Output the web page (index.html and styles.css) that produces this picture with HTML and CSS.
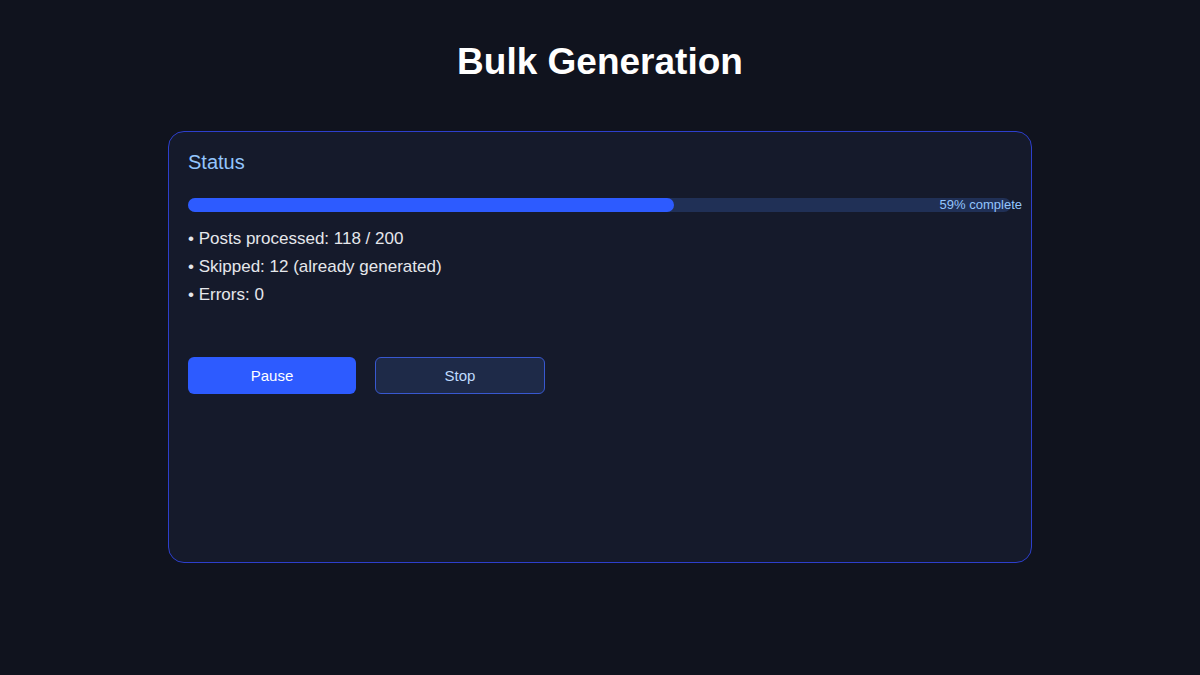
FILE: index.html
```html
<!DOCTYPE html>
<html lang="en">
<head>
<meta charset="utf-8">
<title>Bulk Generation</title>
<link rel="stylesheet" href="styles.css">
</head>
<body>
<main class="page">
  <h1 class="title">Bulk Generation</h1>
  <section class="card">
    <h2 class="card-title">Status</h2>
    <div class="progress">
      <div class="progress-fill" style="width: 59%"></div>
      <span class="progress-label">59% complete</span>
    </div>
    <ul class="stats">
      <li>• Posts processed: 118 / 200</li>
      <li>• Skipped: 12 (already generated)</li>
      <li>• Errors: 0</li>
    </ul>
    <div class="actions">
      <button class="btn btn-primary">Pause</button>
      <button class="btn btn-secondary">Stop</button>
    </div>
  </section>
</main>
</body>
</html>
```

FILE: styles.css
```css
* { box-sizing: border-box; }
html, body {
  margin: 0;
  padding: 0;
  background: #10131e;
  font-family: "Liberation Sans", Arial, sans-serif;
  color: #e5e7eb;
}
.page {
  width: 1200px;
  height: 675px;
  display: flex;
  flex-direction: column;
  align-items: center;
  padding-top: 40px;
}
.title {
  margin: 0;
  font-size: 37px;
  line-height: 44px;
  font-weight: 700;
  color: #ffffff;
}
.card {
  margin-top: 47px;
  width: 864px;
  height: 432px;
  background: #151a2b;
  border: 1.5px solid #2d3fcc;
  border-radius: 16px;
  padding: 18px 20px 20px 19px;
}
.card-title {
  margin: 0;
  font-size: 20px;
  line-height: 24px;
  font-weight: 400;
  color: #93c5fd;
}
.progress {
  position: relative;
  margin-top: 24px;
  height: 14px;
  border-radius: 7px;
  background: #203056;
}
.progress-fill {
  height: 100%;
  border-radius: 7px;
  background: #2d5bff;
}
.progress-label {
  position: absolute;
  right: -11px;
  top: 0;
  line-height: 14px;
  font-size: 13px;
  color: #93c5fd;
}
.stats {
  list-style: none;
  margin: 13px 0 0;
  padding: 0;
}
.stats li {
  font-size: 17px;
  line-height: 28px;
  color: #e5e7eb;
}
.actions {
  display: flex;
  gap: 19px;
  margin-top: 48px;
}
.btn {
  width: 168px;
  height: 37px;
  border-radius: 6px;
  font-family: "Liberation Sans", Arial, sans-serif;
  font-size: 15px;
  cursor: pointer;
}
.btn-primary {
  background: #2d5bff;
  border: none;
  color: #ffffff;
}
.btn-secondary {
  width: 170px;
  background: #1e2a48;
  border: 1.5px solid #3858d0;
  color: #bfdbfe;
}
```
